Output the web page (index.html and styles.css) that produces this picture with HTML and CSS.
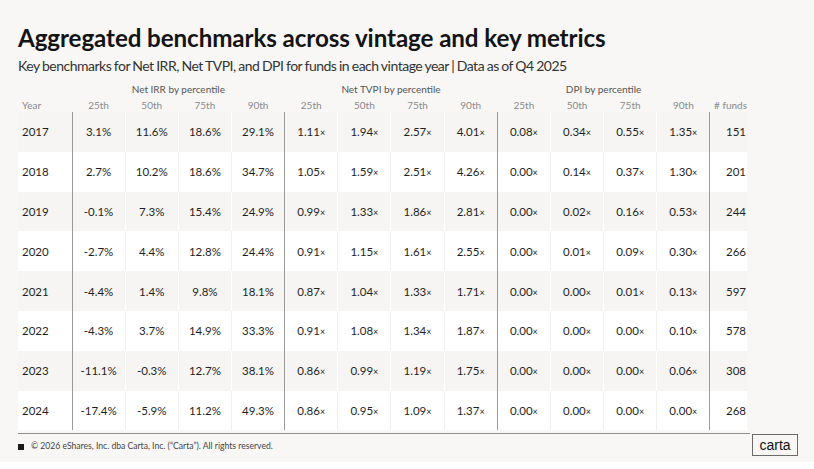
FILE: index.html
```html
<!DOCTYPE html>
<html>
<head>
<meta charset="utf-8">
<link rel="stylesheet" href="styles.css">
</head>
<body>
<div class="page">
  <h1 class="title">Aggregated benchmarks across vintage and key metrics</h1>
  <p class="subtitle">Key benchmarks for Net IRR, Net TVPI, and DPI for funds in each vintage year | Data as of Q4 2025</p>
  <table class="bench">
    <colgroup>
      <col class="c-year">
      <col class="c-num"><col class="c-num"><col class="c-num"><col class="c-num">
      <col class="c-num"><col class="c-num"><col class="c-num"><col class="c-num">
      <col class="c-num"><col class="c-num"><col class="c-num"><col class="c-num">
      <col class="c-funds">
    </colgroup>
    <thead>
      <tr class="group-row">
        <th></th>
        <th colspan="4">Net IRR by percentile</th>
        <th colspan="4">Net TVPI by percentile</th>
        <th colspan="4">DPI by percentile</th>
        <th></th>
      </tr>
      <tr class="col-row">
        <th class="left">Year</th>
        <th>25th</th><th>50th</th><th>75th</th><th>90th</th>
        <th>25th</th><th>50th</th><th>75th</th><th>90th</th>
        <th>25th</th><th>50th</th><th>75th</th><th>90th</th>
        <th class="funds-h"># funds</th>
      </tr>
    </thead>
    <tbody>
      <tr><td class="year">2017</td><td class="g">3.1%</td><td>11.6%</td><td>18.6%</td><td>29.1%</td><td class="g">1.11<span class="x">×</span></td><td>1.94<span class="x">×</span></td><td>2.57<span class="x">×</span></td><td>4.01<span class="x">×</span></td><td class="g">0.08<span class="x">×</span></td><td>0.34<span class="x">×</span></td><td>0.55<span class="x">×</span></td><td>1.35<span class="x">×</span></td><td class="g funds">151</td></tr>
      <tr><td class="year">2018</td><td class="g">2.7%</td><td>10.2%</td><td>18.6%</td><td>34.7%</td><td class="g">1.05<span class="x">×</span></td><td>1.59<span class="x">×</span></td><td>2.51<span class="x">×</span></td><td>4.26<span class="x">×</span></td><td class="g">0.00<span class="x">×</span></td><td>0.14<span class="x">×</span></td><td>0.37<span class="x">×</span></td><td>1.30<span class="x">×</span></td><td class="g funds">201</td></tr>
      <tr><td class="year">2019</td><td class="g">-0.1%</td><td>7.3%</td><td>15.4%</td><td>24.9%</td><td class="g">0.99<span class="x">×</span></td><td>1.33<span class="x">×</span></td><td>1.86<span class="x">×</span></td><td>2.81<span class="x">×</span></td><td class="g">0.00<span class="x">×</span></td><td>0.02<span class="x">×</span></td><td>0.16<span class="x">×</span></td><td>0.53<span class="x">×</span></td><td class="g funds">244</td></tr>
      <tr><td class="year">2020</td><td class="g">-2.7%</td><td>4.4%</td><td>12.8%</td><td>24.4%</td><td class="g">0.91<span class="x">×</span></td><td>1.15<span class="x">×</span></td><td>1.61<span class="x">×</span></td><td>2.55<span class="x">×</span></td><td class="g">0.00<span class="x">×</span></td><td>0.01<span class="x">×</span></td><td>0.09<span class="x">×</span></td><td>0.30<span class="x">×</span></td><td class="g funds">266</td></tr>
      <tr><td class="year">2021</td><td class="g">-4.4%</td><td>1.4%</td><td>9.8%</td><td>18.1%</td><td class="g">0.87<span class="x">×</span></td><td>1.04<span class="x">×</span></td><td>1.33<span class="x">×</span></td><td>1.71<span class="x">×</span></td><td class="g">0.00<span class="x">×</span></td><td>0.00<span class="x">×</span></td><td>0.01<span class="x">×</span></td><td>0.13<span class="x">×</span></td><td class="g funds">597</td></tr>
      <tr><td class="year">2022</td><td class="g">-4.3%</td><td>3.7%</td><td>14.9%</td><td>33.3%</td><td class="g">0.91<span class="x">×</span></td><td>1.08<span class="x">×</span></td><td>1.34<span class="x">×</span></td><td>1.87<span class="x">×</span></td><td class="g">0.00<span class="x">×</span></td><td>0.00<span class="x">×</span></td><td>0.00<span class="x">×</span></td><td>0.10<span class="x">×</span></td><td class="g funds">578</td></tr>
      <tr><td class="year">2023</td><td class="g">-11.1%</td><td>-0.3%</td><td>12.7%</td><td>38.1%</td><td class="g">0.86<span class="x">×</span></td><td>0.99<span class="x">×</span></td><td>1.19<span class="x">×</span></td><td>1.75<span class="x">×</span></td><td class="g">0.00<span class="x">×</span></td><td>0.00<span class="x">×</span></td><td>0.00<span class="x">×</span></td><td>0.06<span class="x">×</span></td><td class="g funds">308</td></tr>
      <tr><td class="year">2024</td><td class="g">-17.4%</td><td>-5.9%</td><td>11.2%</td><td>49.3%</td><td class="g">0.86<span class="x">×</span></td><td>0.95<span class="x">×</span></td><td>1.09<span class="x">×</span></td><td>1.37<span class="x">×</span></td><td class="g">0.00<span class="x">×</span></td><td>0.00<span class="x">×</span></td><td>0.00<span class="x">×</span></td><td>0.00<span class="x">×</span></td><td class="g funds">268</td></tr>
    </tbody>
  </table>
  <div class="footer">
    <span class="square"></span>
    <span class="copy">© 2026 eShares, Inc. dba Carta, Inc. (“Carta”). All rights reserved.</span>
    <span class="logo">carta</span>
  </div>
</div>
</body>
</html>
```

FILE: styles.css
```css
* { box-sizing: border-box; }
html, body { margin: 0; padding: 0; background: #ffffff; }
body { font-family: "Lato", "Liberation Sans", sans-serif; color: #1c1c1c; }

.page {
  width: 814px;
  height: 462px;
  background: #f8f7f5;
  padding: 22px 17px 0 18px;
}

.title {
  margin: 0;
  font-family: "Lato", "Liberation Sans", sans-serif;
  font-weight: 700;
  font-size: 24.2px;
  line-height: 31px;
  letter-spacing: -0.1px;
  color: #141414;
}

.subtitle {
  margin: 4px 0 0 0;
  font-size: 14px;
  line-height: 18px;
  letter-spacing: -0.5px;
  word-spacing: -0.5px;
  color: #333333;
}

.bench {
  margin-top: 4px;
  width: 729px;
  border-collapse: collapse;
  table-layout: fixed;
}

.c-year { width: 54px; }
.c-num { width: 53.17px; }
.c-funds { width: 37px; }

.bench th {
  font-weight: 400;
  padding: 0;
  text-align: center;
  white-space: nowrap;
}

.group-row th {
  height: 19px;
  font-size: 10px;
  color: #555555;
  vertical-align: middle;
}

.col-row th {
  height: 14px;
  font-size: 10px;
  color: #8a8a8a;
  vertical-align: middle;
}

.col-row th.left { text-align: left; padding-left: 4px; }
.col-row th.funds-h { text-align: right; padding-right: 0; }

.bench td {
  height: 39.8px;
  padding: 0;
  text-align: center;
  font-size: 11.5px;
  color: #1f1f1f;
  border-left: 1px solid #ffffff;
  white-space: nowrap;
}

.bench tbody tr:nth-child(odd) { background: #f6f5f3; }
.bench tbody tr:nth-child(even) { background: #ffffff; }
.bench tbody tr:nth-child(even) td { border-left-color: #f1f0ee; }

.bench td.year {
  text-align: left;
  padding-left: 4px;
  border-left: none;
}

.bench td.g,
.bench tbody tr:nth-child(even) td.g { border-left: 1px solid #9a9a9a; }

.bench td.funds { text-align: right; padding-right: 1px; }

.x { font-size: 9px; }

.footer {
  margin-top: 3px;
  width: 732px;
  border-top: 1px solid #8f8f8f;
  display: flex;
  align-items: flex-start;
  position: relative;
  height: 27px;
}

.square {
  width: 6px;
  height: 6px;
  background: #1a1a1a;
  margin-top: 10px;
}

.copy {
  margin-left: 7px;
  margin-top: 7px;
  font-size: 8.6px;
  line-height: 11px;
  color: #444444;
}

.logo {
  position: absolute;
  left: 734px;
  top: 0px;
  width: 46px;
  height: 22px;
  border: 1px solid #6a6a6a;
  background: #f8f7f5;
  font-size: 14px;
  line-height: 20px;
  text-align: center;
  color: #111111;
  font-family: "Liberation Sans", sans-serif;
}
```
